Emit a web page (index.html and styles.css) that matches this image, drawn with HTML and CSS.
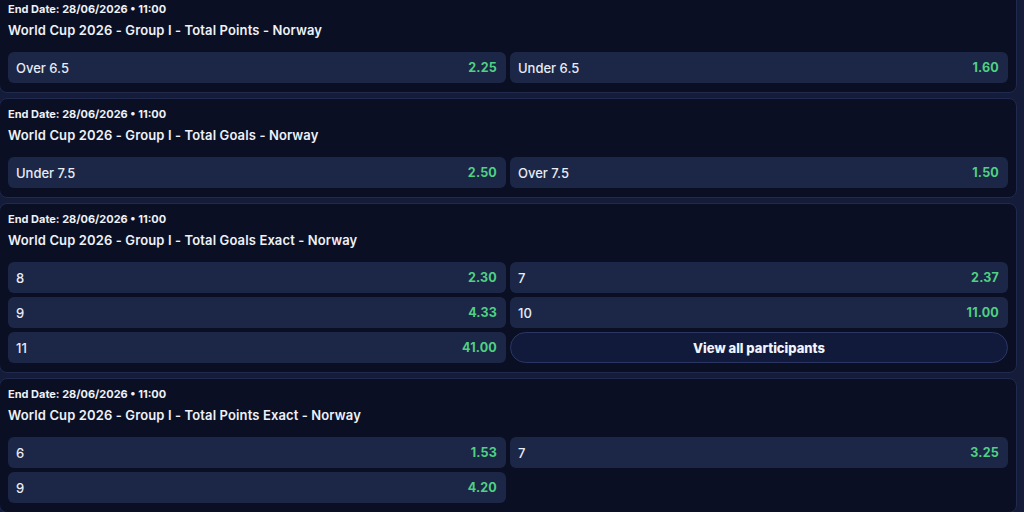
FILE: index.html
```html
<!DOCTYPE html>
<html lang="en">
<head>
    <meta charset="UTF-8">
    <meta name="viewport" content="width=device-width, initial-scale=1.0">
    <title>World Cup 2026 - Norway Markets</title>
    <link rel="stylesheet" href="styles.css">
</head>
<body>

<div class="markets">

    <div class="market">
        <div class="market-date">End Date: 28/06/2026 • 11:00</div>
        <div class="market-title">World Cup 2026 - Group I - Total Points - Norway</div>
        <div class="outcomes">
            <button class="outcome"><span>Over 6.5</span><span class="odds">2.25</span></button>
            <button class="outcome"><span>Under 6.5</span><span class="odds">1.60</span></button>
        </div>
    </div>

    <div class="market">
        <div class="market-date">End Date: 28/06/2026 • 11:00</div>
        <div class="market-title">World Cup 2026 - Group I - Total Goals - Norway</div>
        <div class="outcomes">
            <button class="outcome"><span>Under 7.5</span><span class="odds">2.50</span></button>
            <button class="outcome"><span>Over 7.5</span><span class="odds">1.50</span></button>
        </div>
    </div>

    <div class="market">
        <div class="market-date">End Date: 28/06/2026 • 11:00</div>
        <div class="market-title">World Cup 2026 - Group I - Total Goals Exact - Norway</div>
        <div class="outcomes">
            <button class="outcome"><span>8</span><span class="odds">2.30</span></button>
            <button class="outcome"><span>7</span><span class="odds">2.37</span></button>
            <button class="outcome"><span>9</span><span class="odds">4.33</span></button>
            <button class="outcome"><span>10</span><span class="odds">11.00</span></button>
            <button class="outcome"><span>11</span><span class="odds">41.00</span></button>
            <button class="view-all">View all participants</button>
        </div>
    </div>

    <div class="market">
        <div class="market-date">End Date: 28/06/2026 • 11:00</div>
        <div class="market-title">World Cup 2026 - Group I - Total Points Exact - Norway</div>
        <div class="outcomes">
            <button class="outcome"><span>6</span><span class="odds">1.53</span></button>
            <button class="outcome"><span>7</span><span class="odds">3.25</span></button>
            <button class="outcome"><span>9</span><span class="odds">4.20</span></button>
        </div>
    </div>

</div>

</body>
</html>
```

FILE: styles.css
```css
body {
    margin: 0;
    background-color: #141c3a;
    font-family: Inter, "Noto Sans", sans-serif;
    color: #eef1f8;
    overflow: hidden;
}
.markets {
    display: flex;
    flex-direction: column;
    gap: 5px;
    margin: -7px 7px 0 -1px;
}
.market {
    background-color: #0a0f23;
    border: 1px solid #1f2a4e;
    border-radius: 8px;
    padding: 8px 8px 9px 8px;
}
.market-date {
    font-size: 11px;
    font-weight: 700;
    line-height: 14px;
}
.market-title {
    margin-top: 5px;
    font-size: 13px;
    font-weight: 600;
    line-height: 18px;
    letter-spacing: 0.12px;
}
.outcomes {
    margin-top: 13px;
    display: grid;
    grid-template-columns: 1fr 1fr;
    gap: 4px;
}
.outcome {
    display: flex;
    justify-content: space-between;
    align-items: center;
    height: 31px;
    padding: 0 9px 0 8px;
    background-color: #1c2747;
    border: none;
    border-radius: 6px;
    color: #e8ecf5;
    font-family: inherit;
    font-size: 13px;
    font-weight: 500;
    cursor: pointer;
}
.outcome .odds {
    color: #4fd183;
    font-size: 12.5px;
    font-weight: 700;
    letter-spacing: 0.2px;
}
.view-all {
    height: 31px;
    background-color: #111a3a;
    border: 1px solid #2a3764;
    border-radius: 16px;
    color: #f2f4fa;
    font-family: inherit;
    font-size: 13px;
    font-weight: 800;
    cursor: pointer;
}
```
